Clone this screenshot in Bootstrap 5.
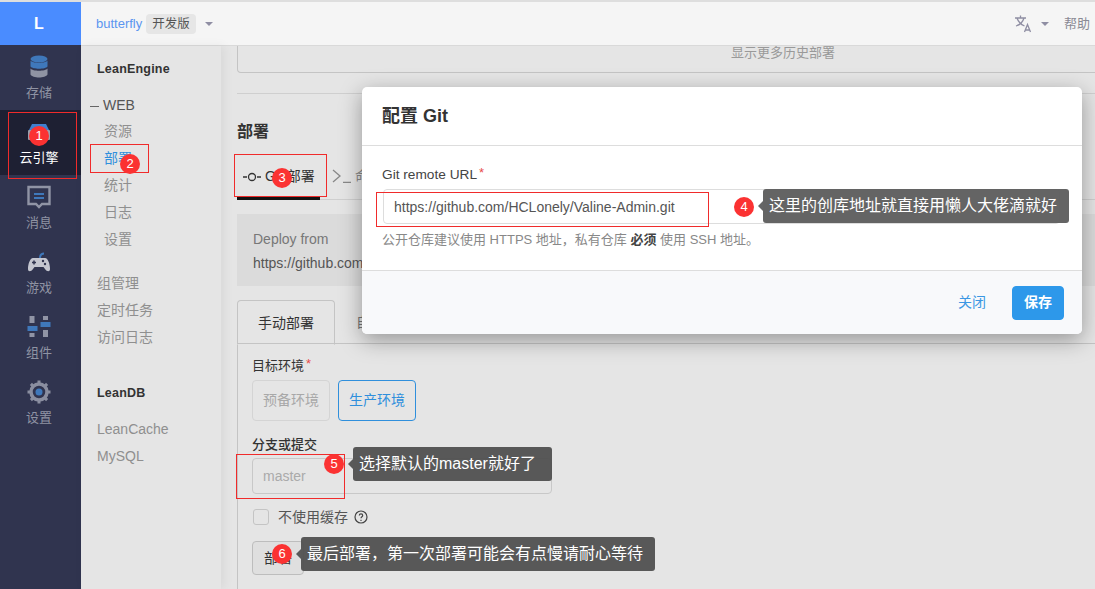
<!DOCTYPE html>
<html lang="zh">
<head>
<meta charset="utf-8">
<title>配置 Git</title>
<link href="https://cdn.jsdelivr.net/npm/bootstrap@5.3.0/dist/css/bootstrap.min.css" rel="stylesheet">
<style>
html,body{height:589px;overflow:hidden}
body{font-family:"Liberation Sans","Noto Sans CJK SC",sans-serif;font-size:14px;color:#555;background:#e5e5e5;border-top:2px solid #dedede;position:relative}
.shell{height:587px}
.rail{width:81px;background:#30344f;flex:none}
.brand{height:43px;background:#4a8cff;color:#fff;font-weight:700;font-size:16px;padding-right:3px}
.rail-item{height:65px;color:#8f93a3;font-size:13px;padding:10px 3px 0 0;gap:4px}
.rail-item svg{width:24px;height:24px;display:block}
.rail-item.on{background:#1e2033;color:#fff}
.right-col{min-width:0}
.topbar{height:44px;background:#f5f5f5;border-bottom:1px solid #d9d9d9;padding:0 5px 0 15px;flex:none}
.app-name{color:#5b95f0;font-size:13px}
.env-tag{background:#e6e6e6;color:#555;border-radius:4px;font-size:12.500px;padding:2px 6px;margin-left:4px;line-height:16px}
.caret{width:0;height:0;border-left:4px solid transparent;border-right:4px solid transparent;border-top:4px solid #8f8ea3;display:inline-block}
.caret-a{margin-left:9px}
.caret-b{margin-left:9px}
.tr-i{margin-left:auto}
.help{color:#8a8a94;font-size:13px;margin-left:15px}
.sub{width:140px;flex:none;background:#e5e5e5;padding:10px 0 0 16px;box-shadow:3px 0 10px rgba(0,0,0,.06);position:relative;z-index:1}
.sub a,.sub div{display:block;line-height:27px;height:27px;color:#8f8f8f;text-decoration:none}
.sub .group-title{color:#333;font-weight:700;font-size:12.500px;letter-spacing:.2px}
.sub .web{color:#555;margin:9px 0 -1px -7px}
.sub .web::before{content:"";display:inline-block;width:9px;height:1px;background:#666;vertical-align:middle;margin-right:4px}
.sub .leaf{padding-left:7px}
.sub .leaf.on{color:#2f8fdc}
.gap-a{margin-top:17px}
.gap-b{margin-top:29px}
.gap-c{margin-top:9px}
.work{padding:0 0 0 16px;min-width:0;overflow:hidden;background:#e5e5e5}
.old-card{height:27px;margin-right:-20px;border:1px solid #c4c4c4;border-top:0;border-radius:0 0 4px 4px;text-align:center;color:#999;font-size:13px;line-height:14px;padding-left:214px}
.rule{height:1px;background:#cfcfcf;margin-top:20px}
.sec-title{font-size:16px;font-weight:700;color:#333;margin:28px 0 0;line-height:20px}
.tabs-a{border-bottom:1px solid #cfcfcf;height:46px;margin-top:12px;gap:10px}
.tab-a{width:83px;border-bottom:3px solid #111;color:#333;height:46px;line-height:44px;padding-left:6px;white-space:nowrap}
.tab-b{color:#888;line-height:44px;white-space:nowrap;margin-left:2px}
.tab-a svg,.tab-b svg{vertical-align:-2px}
.deploy-box{height:72px;background:#dbdbdb;margin-top:14px;padding:13px 16px;line-height:24px;color:#555}
.deploy-box .from{color:#777}
.tabs-b{margin-top:14px;height:44px;border-bottom:1px solid #c4c4c4}
.tab-c{width:98px;height:45px;border:1px solid #c4c4c4;border-bottom-color:#e5e5e5;border-radius:4px 4px 0 0;text-align:center;line-height:44px;color:#333}
.tab-d{padding-left:21px;line-height:44px;color:#777}
.pane{border-left:1px solid #c4c4c4;padding:14px 0 0 14px;height:260px}
.lbl{color:#333;line-height:16px;font-size:13px;display:block}
.star{color:#e84c4c;font-size:13px;vertical-align:top;margin-left:2px;line-height:12px}
.env-row{margin-top:6px;gap:8px}
.env-btn{width:78px;height:41px;font-size:14px;padding:0;border-radius:4px;border:1px solid #d4d4d4;color:#a8a8a8;background:transparent}
.env-btn.on,.env-btn.on:hover{border-color:#2f8fdc;color:#2f8fdc;background:transparent}
.branch-lbl{margin-top:16px;font-weight:500;font-size:13px}
.branch{width:300px;height:36px;margin-top:5px;font-size:14px;color:#aaa;background:transparent;border:1px solid #c8c8c8;padding:0 10px;border-radius:4px}
.cache{margin-top:11px;color:#555;height:16px}
.cache .form-check-input{width:16px;height:16px;margin:0 9px 0 1px;background:transparent;border-color:#c4c4c4;border-radius:3px;flex:none}
.help-i{width:14px;height:14px;margin-left:6px}
.deploy-btn{width:52px;height:34px;margin-top:12px;padding:0;font-size:14px;background:#dfdfdf;border:1px solid #bdbdbd;color:#333;border-radius:4px}
.dialog{position:absolute;left:362px;top:85px;width:720px;height:247px;background:#fff;border-radius:5px;box-shadow:0 6px 22px rgba(0,0,0,.35);overflow:hidden;z-index:5}
.dialog-head{height:59px;padding:0 20px;border-bottom:1px solid #ddd;font-size:18px;font-weight:700;color:#333}
.dialog-body{height:125px;padding:21px 21px 0;border-bottom:1px solid #ddd}
.dialog-body .lbl{color:#444;font-size:13.700px;margin-left:-1px}
.url{height:35px;margin-top:6px;width:677px;font-size:14px;padding:0 10px;color:#555;border-color:#ddd;border-radius:4px}
.hint{color:#888;font-size:13px;margin:7px 0 0 -1px;line-height:18px}
.hint b{color:#444}
.dialog-foot{height:63px;background:#f8f9fb;padding:0 18px 0 0;gap:26px}
.link-close{color:#3b97e3;font-size:14px;text-decoration:none}
.save{width:52px;height:34px;padding:0;background:#2d98ea;border-color:#2d98ea;color:#fff;font-size:14px;font-weight:700;border-radius:4px}
.mk{position:absolute;border:1px solid #f02b2b;z-index:7;pointer-events:none}
.num{position:absolute;width:20px;height:20px;border-radius:50%;background:#fb3232;color:#fff;font-size:13px;display:flex;align-items:center;justify-content:center;z-index:8}
.tip{position:absolute;height:34px;border-radius:3px;background:rgba(80,80,80,.95);color:#fff;font-size:16px;line-height:34px;padding:0 6px;white-space:nowrap;z-index:8}
.tip::before{content:"";position:absolute;left:-5px;top:12px;border-top:5px solid transparent;border-bottom:5px solid transparent;border-right:5px solid #595959}
.tip.lighter{background:rgba(92,92,92,.95)}
.tip.lighter::before{border-right-color:#666}
</style>
</head>
<body>
<div class="shell d-flex">
  <nav class="rail d-flex flex-column">
    <div class="brand d-flex align-items-center justify-content-center">L</div>
    <div class="rail-item d-flex flex-column align-items-center">
      <svg viewBox="0 0 24 24"><ellipse cx="12" cy="4" rx="8.500" ry="3.500" fill="#3f78bb"/><path d="M3.500 5.500c2 3 15 3 17 0v6c-2 3-15 3-17 0z" fill="#3f78bb"/><path d="M3.500 13.500c2 3 15 3 17 0v6c-2 4-15 4-17 0z" fill="#8f93a3"/></svg>
      <span>存储</span>
    </div>
    <div class="rail-item on d-flex flex-column align-items-center">
      <svg viewBox="0 0 24 24"><path d="M5 4h14l3 6H2z" fill="#3f7fd0"/><rect x="1" y="10" width="22" height="10" rx="1" fill="#9aa0ad"/><rect x="4" y="12" width="5" height="5" fill="#2a2c40"/></svg>
      <span>云引擎</span>
    </div>
    <div class="rail-item d-flex flex-column align-items-center">
      <svg viewBox="0 0 24 24"><path d="M1.500 2h21v17h-7.500l-3 3-3-3H1.500z" fill="none" stroke="#9094a5" stroke-width="2.400"/><rect x="7" y="8" width="10" height="2" fill="#3f78bb"/><rect x="7" y="12" width="10" height="2" fill="#3f78bb"/></svg>
      <span>消息</span>
    </div>
    <div class="rail-item d-flex flex-column align-items-center">
      <svg viewBox="0 0 24 24"><path d="M13 8c0-3 1-4.500 4-4.500" fill="none" stroke="#3f78bb" stroke-width="2"/><path d="M6 8h12c3 0 5 6 5 11 0 3-3 3-5 0l-1.500-2h-9L6 19c-2 3-5 3-5 0C1 14 3 8 6 8z" fill="#c4c6d0"/><path d="M5 12.500h4M7 10.500v4" stroke="#30344f" stroke-width="1.500"/><circle cx="16" cy="11" r="1.200" fill="#30344f"/><circle cx="18" cy="14" r="1.200" fill="#30344f"/></svg>
      <span>游戏</span>
    </div>
    <div class="rail-item d-flex flex-column align-items-center">
      <svg viewBox="0 0 24 24"><rect x="2.500" y="1" width="5" height="7" fill="#9094a5"/><rect x="0.500" y="11" width="10" height="5" fill="#3f78bb"/><rect x="2.500" y="18" width="5" height="4" fill="#9094a5"/><rect x="16" y="1" width="5" height="4" fill="#9094a5"/><rect x="13.500" y="7" width="10" height="5" fill="#3f78bb"/><rect x="16" y="15" width="5" height="7" fill="#9094a5"/></svg>
      <span>组件</span>
    </div>
    <div class="rail-item d-flex flex-column align-items-center">
      <svg viewBox="0 0 24 24"><circle cx="12" cy="12" r="8" fill="none" stroke="#8a8ea0" stroke-width="3.500"/><path d="M12 .5v4M12 19.500v4M.5 12h4M19.500 12h4M3.900 3.900l2.800 2.800M17.300 17.300l2.800 2.800M20.100 3.900l-2.800 2.800M6.700 17.300l-2.800 2.800" stroke="#8a8ea0" stroke-width="3"/><circle cx="12" cy="12" r="3.500" fill="#3f78bb"/></svg>
      <span>设置</span>
    </div>
  </nav>
  <div class="right-col flex-grow-1 d-flex flex-column">
    <header class="topbar d-flex align-items-center">
      <span class="app-name">butterfly</span>
      <span class="env-tag">开发版</span>
      <span class="caret caret-a"></span>
      <svg class="tr-i" width="18" height="19" viewBox="0 0 18 19" fill="none" stroke="#8f8ea3" stroke-width="1.300"><path d="M1 4h11M6.500 1.500V4M3 4c1 3 3 6 7.500 8M10 4c-1 3.500-3 6.500-8 8"/><path d="M10.500 18l3-7.500 3 7.500M11.500 16h4"/></svg>
      <span class="caret caret-b"></span>
      <span class="help">帮助</span>
    </header>
    <div class="d-flex flex-grow-1" style="min-height:0">
      <aside class="sub">
        <div class="group-title">LeanEngine</div>
        <div class="web">WEB</div>
        <a class="leaf" href="#">资源</a>
        <a class="leaf on" href="#">部署</a>
        <a class="leaf" href="#">统计</a>
        <a class="leaf" href="#">日志</a>
        <a class="leaf" href="#">设置</a>
        <a class="gap-a" href="#">组管理</a>
        <a href="#">定时任务</a>
        <a href="#">访问日志</a>
        <div class="group-title gap-b">LeanDB</div>
        <a class="gap-c" href="#">LeanCache</a>
        <a href="#">MySQL</a>
      </aside>
      <main class="work flex-grow-1">
        <div class="old-card">显示更多历史部署</div>
        <div class="rule"></div>
        <h2 class="sec-title">部署</h2>
        <div class="tabs-a d-flex">
          <div class="tab-a"><svg width="18" height="12" viewBox="0 0 18 12" fill="none" stroke="#333" stroke-width="1.300"><circle cx="9" cy="6" r="3.500"/><path d="M0 6h4M14 6h4"/></svg> Git 部署</div>
          <div class="tab-b"><svg width="19" height="14" viewBox="0 0 19 14" fill="none" stroke="#888" stroke-width="1.300"><path d="M1 1l7 6-7 6M11 13.500h8"/></svg> 命令行部署</div>
        </div>
        <div class="deploy-box">
          <div class="from">Deploy from</div>
          <div>https://github.com/HCLonely/Valine-Admin.git</div>
        </div>
        <div class="tabs-b d-flex">
          <div class="tab-c">手动部署</div>
          <div class="tab-d">自动部署</div>
        </div>
        <div class="pane">
          <label class="lbl">目标环境<span class="star">*</span></label>
          <div class="env-row d-flex">
            <button class="btn env-btn" type="button">预备环境</button>
            <button class="btn env-btn on" type="button">生产环境</button>
          </div>
          <label class="lbl branch-lbl">分支或提交</label>
          <input class="form-control branch" value="master" readonly>
          <div class="form-check cache d-flex align-items-center p-0">
            <input class="form-check-input" type="checkbox">
            <span>不使用缓存</span>
            <svg class="help-i" viewBox="0 0 14 14" fill="none" stroke="#444" stroke-width="1.200"><circle cx="7" cy="7" r="6"/><path d="M5.300 5.500c0-2.200 3.400-2.200 3.400 0 0 1.300-1.700 1.300-1.700 2.800"/><path d="M7 9.700v1.200"/></svg>
          </div>
          <button class="btn deploy-btn d-block" type="button">部署</button>
        </div>
      </main>
    </div>
  </div>
</div>

<section class="dialog d-flex flex-column">
  <div class="dialog-head d-flex align-items-center">配置 Git</div>
  <div class="dialog-body">
    <label class="lbl">Git remote URL<span class="star">*</span></label>
    <input class="form-control url" value="https://github.com/HCLonely/Valine-Admin.git" readonly>
    <div class="hint">公开仓库建议使用 HTTPS 地址，私有仓库 <b>必须</b> 使用 SSH 地址。</div>
  </div>
  <div class="dialog-foot d-flex align-items-center justify-content-end">
    <a class="link-close" href="#">关闭</a>
    <button class="btn save" type="button">保存</button>
  </div>
</section>

<div class="mk" style="left:8px;top:110px;width:69px;height:67px"></div>
<div class="mk" style="left:90px;top:142px;width:59px;height:29px"></div>
<div class="mk" style="left:234px;top:152px;width:93px;height:43px"></div>
<div class="mk" style="left:376px;top:190px;width:333px;height:35px"></div>
<div class="mk" style="left:236px;top:452px;width:109px;height:45px"></div>
<span class="num" style="left:29px;top:124px">1</span>
<span class="num" style="left:120px;top:152px">2</span>
<span class="num" style="left:272px;top:166px">3</span>
<span class="num" style="left:734px;top:195px">4</span>
<span class="num" style="left:324px;top:452px">5</span>
<span class="num" style="left:272px;top:542px">6</span>
<div class="tip lighter" style="left:763px;top:187px;width:306px">这里的创库地址就直接用懒人大佬滴就好</div>
<div class="tip" style="left:353px;top:445px;width:199px">选择默认的master就好了</div>
<div class="tip" style="left:301px;top:535px;width:354px">最后部署，第一次部署可能会有点慢请耐心等待</div>
<script src="https://cdn.jsdelivr.net/npm/bootstrap@5.3.0/dist/js/bootstrap.bundle.min.js"></script>
</body>
</html>
